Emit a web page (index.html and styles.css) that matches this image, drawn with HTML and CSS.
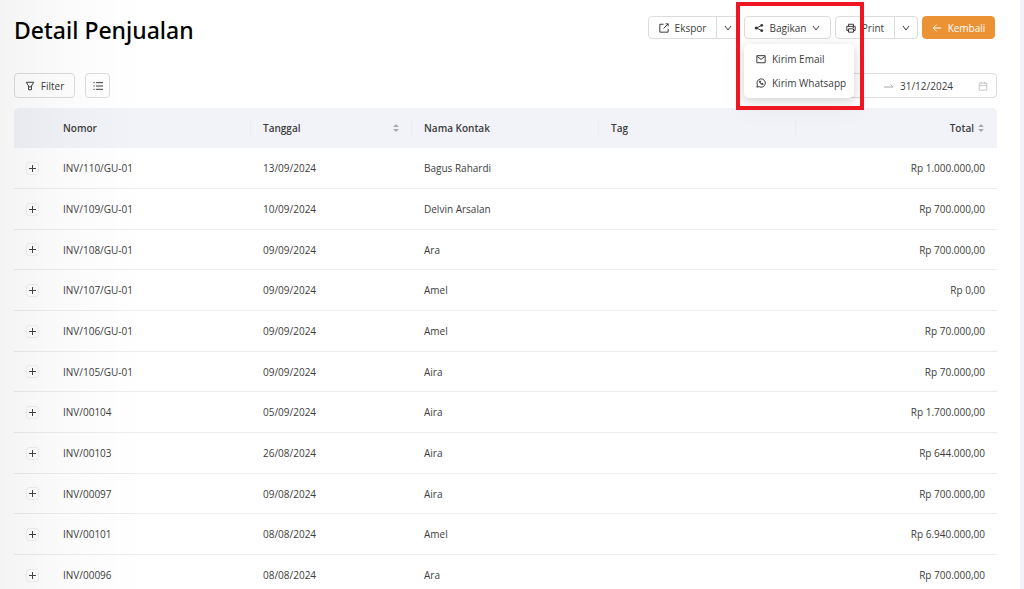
FILE: index.html
```html
<!DOCTYPE html>
<html lang="id">
<head>
<meta charset="utf-8">
<meta name="viewport" content="width=device-width, initial-scale=1">
<title>Detail Penjualan</title>
<link rel="stylesheet" href="styles.css">
</head>
<body>
<svg class="defs" aria-hidden="true">
  <symbol id="chevron" viewBox="0 0 10 10"><path d="M2 3l3 4 3-4"/></symbol>
  <symbol id="sort" viewBox="0 0 8 10"><path d="M4 1l3 3H1zM4 9l3-3H1z"/></symbol>
</svg>
<main class="page">
  <header class="topbar">
    <h1 class="title">Detail Penjualan</h1>
    <div class="actions">
      <div class="split">
        <button class="btn export" type="button">
          <svg class="icon" viewBox="0 0 12 12"><path d="M5.500 1.500H1v9.500h10V7M8 1h3v3M11 1L5.500 6.500"/></svg>Ekspor
        </button>
        <button class="btn arrow" type="button" aria-label="Opsi ekspor"><svg class="chev"><use href="#chevron"/></svg></button>
      </div>
      <div class="share">
        <button class="btn share-btn" type="button" aria-expanded="true">
          <svg class="icon" viewBox="0 0 12 12"><path d="M9 3L3 6l6 3"/><g class="solid"><circle cx="9.300" cy="2.800" r="1.700"/><circle cx="2.700" cy="6" r="1.900"/><circle cx="9.300" cy="9.200" r="1.700"/></g></svg>Bagikan
          <svg class="chev"><use href="#chevron"/></svg>
        </button>
        <div class="menu">
          <button class="item" type="button"><svg class="icon" viewBox="0 0 12 12"><path d="M1 2h10v8.500H1zM1.500 3L6 6.500 10.500 3"/></svg>Kirim Email</button>
          <button class="item" type="button"><svg class="icon" viewBox="0 0 12 12"><path d="M1 11l.7-2.700A5 5 0 1 1 3.700 10.400zM4.200 3.700c-.3 2.200 2 4.300 4 4.300l.5-1-1.300-.7-.7.5-1.300-1.300.4-.8-.6-1.200z"/></svg>Kirim Whatsapp</button>
        </div>
        <div class="highlight"></div>
      </div>
      <div class="split">
        <button class="btn print" type="button">
          <svg class="icon" viewBox="0 0 12 12"><path d="M3 4V1.500h6V4M3 9H1V4h10v5H9M3 7h6v4H3zM8 5.500h1.500"/></svg>Print
        </button>
        <button class="btn arrow" type="button" aria-label="Opsi print"><svg class="chev"><use href="#chevron"/></svg></button>
      </div>
      <button class="btn primary" type="button">
        <svg class="icon" viewBox="0 0 12 12"><path d="M11 6H2M5.500 2L1.500 6l4 4"/></svg>Kembali
      </button>
    </div>
  </header>

  <div class="toolbar">
    <button class="btn filter" type="button"><svg class="icon" viewBox="0 0 12 12"><path d="M1.500 1.500h9L7.700 6v4.500H4.300V6zM4.300 7h3.400"/></svg>Filter</button>
    <button class="btn list" type="button" aria-label="Daftar"><svg class="icon wide" viewBox="0 0 12 12"><path d="M3.500 2H12M3.500 6H12M3.500 10H12M.5 2H2M.5 6H2M.5 10H2"/></svg></button>
    <div class="range">
      <input class="date start" type="text" aria-label="Tanggal mulai">
      <svg class="to" viewBox="0 0 10 10"><path d="M0 6h9L6.500 3.500"/></svg>
      <input class="date" type="text" value="31/12/2024" aria-label="Tanggal akhir">
      <svg class="cal" viewBox="0 0 12 12"><path d="M1.500 2.500h9v8.500h-9zM1.500 5.500h9M4 1v2.500M8 1v2.500"/></svg>
    </div>
  </div>

  <table class="grid">
    <colgroup><col class="c-plus"><col class="c-no"><col class="c-date"><col class="c-name"><col class="c-tag"><col></colgroup>
    <thead>
      <tr>
        <th></th><th>Nomor</th>
        <th><div class="head">Tanggal<svg class="sort"><use href="#sort"/></svg></div></th>
        <th>Nama Kontak</th><th>Tag</th>
        <th><div class="head end">Total<svg class="sort"><use href="#sort"/></svg></div></th>
      </tr>
    </thead>
    <tbody>
      <tr><td><button class="plus" type="button" aria-label="Buka"></button></td><td>INV/110/GU-01</td><td>13/09/2024</td><td>Bagus Rahardi</td><td></td><td class="num">Rp 1.000.000,00</td></tr>
      <tr><td><button class="plus" type="button" aria-label="Buka"></button></td><td>INV/109/GU-01</td><td>10/09/2024</td><td>Delvin Arsalan</td><td></td><td class="num">Rp 700.000,00</td></tr>
      <tr><td><button class="plus" type="button" aria-label="Buka"></button></td><td>INV/108/GU-01</td><td>09/09/2024</td><td>Ara</td><td></td><td class="num">Rp 700.000,00</td></tr>
      <tr><td><button class="plus" type="button" aria-label="Buka"></button></td><td>INV/107/GU-01</td><td>09/09/2024</td><td>Amel</td><td></td><td class="num">Rp 0,00</td></tr>
      <tr><td><button class="plus" type="button" aria-label="Buka"></button></td><td>INV/106/GU-01</td><td>09/09/2024</td><td>Amel</td><td></td><td class="num">Rp 70.000,00</td></tr>
      <tr><td><button class="plus" type="button" aria-label="Buka"></button></td><td>INV/105/GU-01</td><td>09/09/2024</td><td>Aira</td><td></td><td class="num">Rp 70.000,00</td></tr>
      <tr><td><button class="plus" type="button" aria-label="Buka"></button></td><td>INV/00104</td><td>05/09/2024</td><td>Aira</td><td></td><td class="num">Rp 1.700.000,00</td></tr>
      <tr><td><button class="plus" type="button" aria-label="Buka"></button></td><td>INV/00103</td><td>26/08/2024</td><td>Aira</td><td></td><td class="num">Rp 644.000,00</td></tr>
      <tr><td><button class="plus" type="button" aria-label="Buka"></button></td><td>INV/00097</td><td>09/08/2024</td><td>Aira</td><td></td><td class="num">Rp 700.000,00</td></tr>
      <tr><td><button class="plus" type="button" aria-label="Buka"></button></td><td>INV/00101</td><td>08/08/2024</td><td>Amel</td><td></td><td class="num">Rp 6.940.000,00</td></tr>
      <tr><td><button class="plus" type="button" aria-label="Buka"></button></td><td>INV/00096</td><td>08/08/2024</td><td>Ara</td><td></td><td class="num">Rp 700.000,00</td></tr>
    </tbody>
  </table>
</main>
</body>
</html>
```

FILE: styles.css
```css
* { box-sizing: border-box; }
body {
  margin: 0;
  background: #fff;
  color: #3c3c3c;
  font: 10px/16px "Open Sans", "Noto Sans", sans-serif;
}
html { scrollbar-width: none; }
button, input { font: inherit; color: inherit; }
svg { fill: none; stroke: currentColor; flex: none; }
.defs { display: none; }

.page {
  position: relative;
  min-height: 100vh;
  padding: 15px 23px 0 14px;
  border-right: 4px solid #f1f3f9;
}
/* soft shade along the left edge */
.page::after {
  content: "";
  position: absolute;
  inset: 0 auto 0 0;
  width: 144px;
  background: linear-gradient(to right, rgba(0, 0, 0, .045), rgba(0, 0, 0, .015) 50%, transparent);
  pointer-events: none;
}

.topbar { display: flex; justify-content: space-between; align-items: flex-start; height: 58px; }
.title { margin: 0; font-family: "Noto Sans", "Open Sans", sans-serif; font-size: 23px; line-height: 30px; font-weight: 500; color: #000; }
.actions { display: flex; gap: 4px; padding: 1px 2px 0 0; }

.btn {
  display: inline-flex;
  align-items: center;
  justify-content: center;
  height: 23px;
  padding: 0;
  border: 1px solid #dcdcdc;
  border-radius: 4px;
  background: #fff;
  white-space: nowrap;
}
.icon { width: 10px; height: 10px; margin-right: 6px; stroke-width: 1.2; }
.wide { margin: 0; }
.solid { fill: currentColor; stroke: none; }
.chev { width: 10px; height: 10px; }
.split { display: flex; }
.export { width: 69px; border-radius: 4px 0 0 4px; }
.print { width: 60px; border-radius: 4px 0 0 4px; }
.arrow { width: 24px; margin-left: -1px; border-radius: 0 4px 4px 0; }
.primary { width: 73px; background: #eb9234; border-color: #eb9234; color: #fff; }

.share { position: relative; }
.share-btn { width: 87px; }
.share-btn .chev { margin-left: 5px; }
.menu {
  position: absolute;
  z-index: 2;
  top: 28px;
  left: 0;
  width: 110px;
  padding: 3px;
  border-radius: 5px;
  background: #fff;
  box-shadow: 0 3px 10px rgba(0, 0, 0, .14), 0 6px 28px 6px rgba(0, 0, 0, .04);
}
.item {
  display: flex;
  align-items: center;
  width: 100%;
  height: 24px;
  padding: 0 9px;
  border: 0;
  background: none;
  white-space: nowrap;
}
.highlight {
  position: absolute;
  z-index: 3;
  top: -14px;
  left: -8px;
  width: 128px;
  height: 108px;
  border: 4px solid #ee1620;
  pointer-events: none;
}

.toolbar { display: flex; gap: 10px; margin-bottom: 10px; }
.toolbar .btn { height: 25px; }
.filter { width: 61px; }
.list { width: 25px; }
.range {
  display: flex;
  align-items: center;
  width: 240px;
  height: 25px;
  margin-left: auto;
  padding: 0 8px;
  border: 1px solid #dcdcdc;
  border-radius: 4px;
  background: #fff;
}
.date { width: 72px; padding: 0; border: 0; background: none; outline: 0; }
.start { flex: 1; min-width: 0; }
.to { width: 10px; height: 10px; margin-right: 6px; color: #aaa; }
.cal { width: 10px; height: 10px; margin-left: 6px; color: #bbb; }

.grid { width: 100%; border-spacing: 0; table-layout: fixed; }
.c-plus { width: 37px; }
.c-no { width: 200px; }
.c-date { width: 161px; }
.c-name { width: 187px; }
.c-tag { width: 197px; }
th, td { height: 41px; padding: 0 12px; text-align: left; }
th {
  height: 40px;
  background: linear-gradient(#ebedf2, #ebedf2) right center / 1px 16px no-repeat #f2f3f8;
  font-weight: 600;
}
th:first-child, th:last-child { background: #f2f3f8; }
th:first-child { border-radius: 5px 0 0; }
th:last-child { border-radius: 0 5px 0 0; }
td { border-bottom: 1px solid #ececec; }
tr:nth-child(3n) td { height: 40px; }
.head { display: flex; align-items: center; justify-content: space-between; }
.end { justify-content: flex-end; gap: 3px; }
.sort { width: 8px; height: 10px; fill: #aaa; stroke: none; }
.num { text-align: right; }
.plus {
  display: block;
  width: 13px;
  height: 13px;
  padding: 0;
  border: 1px solid #f0f0f0;
  border-radius: 3px;
  background:
    linear-gradient(#444, #444) center / 7px 1px no-repeat,
    linear-gradient(#444, #444) center / 1px 7px no-repeat,
    #fff;
}
```
